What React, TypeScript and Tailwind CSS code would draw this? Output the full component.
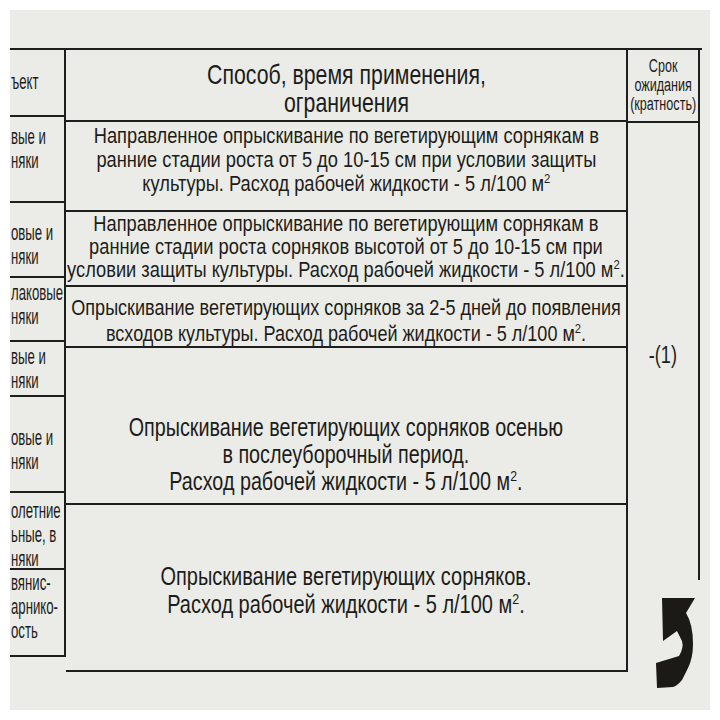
import React from "react";

const M2 = () => (
  <>
    м<sup className="text-[0.62em] top-[-0.6em]">2</sup>
  </>
);

const objectCells = [
  { cls: "h-[67px] pt-[20px]", lines: ["ъект"] },
  { cls: "h-[86px] pt-[8px]", lines: ["вые и", "няки"] },
  { cls: "h-[75px] pt-[18px]", lines: ["овые и", "няки"] },
  { cls: "h-[64px] pt-[3px]", lines: ["лаковые", "няки"] },
  { cls: "h-[55px] pt-[3px]", lines: ["вые и", "няки"] },
  { cls: "h-[96px] pt-[29px]", lines: ["овые и", "няки"] },
  { cls: "h-[77px] pt-[6px] leading-[22px]", lines: ["олетние", "ьные, в", "няки"] },
  { cls: "h-[87px] pt-[1px] leading-[22px]", lines: ["вянис-", "арнико-", "ость"] },
];

const Arrow = () => (
  <svg width="42" height="94" viewBox="0 0 42 94" className="ml-[27px] mt-[16px]">
    <path
      d="M7 2 L40 2 L31 17 Q38 28 38 48 Q38 62 33 72 L27 84 Q22 90 18 91 L2 92 L1 67 L24 60 Q29 52 27 45 L22 35 L8 45 Z"
      fill="#1b1a16"
    />
  </svg>
);

export default function App() {
  return (
    <div className="w-[720px] h-[720px] bg-white pt-[10px] pl-[10px]">
      <div className="w-[700px] h-[700px] bg-[#ebece7] overflow-hidden pt-[38px] text-[#1c1c1a] font-['Liberation_Sans',Arial,sans-serif]">
        <div className="flex items-start w-[692px] border-t-2 border-[#1e1e1c]">
          {/* объект */}
          <div className="w-[56px] shrink-0 flex flex-col border-r-2 border-[#1e1e1c]">
            {objectCells.map((c, i) => (
              <div
                key={i}
                className={`${c.cls} overflow-hidden border-b-2 border-[#1e1e1c] pl-[1px] text-[22px] leading-[24px] whitespace-nowrap`}
              >
                <div className="scale-x-[0.6] origin-left">
                  {c.lines.map((l) => (
                    <div key={l}>{l}</div>
                  ))}
                </div>
              </div>
            ))}
          </div>

          {/* способ, время применения */}
          <div className="w-[562px] shrink-0 flex flex-col border-r-2 border-[#1e1e1c] text-center whitespace-nowrap">
            <div className="h-[72px] border-b-2 border-[#1e1e1c] flex justify-center pt-[11px]">
              <p className="scale-x-[0.76] text-[28px] leading-[28px]">
                Способ, время применения,
                <br />
                ограничения
              </p>
            </div>
            <div className="h-[90px] border-b-2 border-[#1e1e1c] flex justify-center pt-[2px]">
              <p className="scale-x-[0.83] text-[22px] leading-[24px]">
                Направленное опрыскивание по вегетирующим сорнякам в
                <br />
                ранние стадии роста от 5 до 10-15 см при условии защиты
                <br />
                культуры. Расход рабочей жидкости - 5 л/100 <M2 />
              </p>
            </div>
            <div className="h-[75px] border-b-2 border-[#1e1e1c] flex justify-center">
              <p className="scale-x-[0.83] text-[22px] leading-[23px]">
                Направленное опрыскивание по вегетирующим сорнякам в
                <br />
                ранние стадии роста сорняков высотой от 5 до 10-15 см при
                <br />
                условии защиты культуры. Расход рабочей жидкости - 5 л/100 <M2 />.
              </p>
            </div>
            <div className="h-[61px] border-b-2 border-[#1e1e1c] flex justify-center pt-[8px]">
              <p className="scale-x-[0.82] text-[22px] leading-[26px]">
                Опрыскивание вегетирующих сорняков за 2-5 дней до появления
                <br />
                всходов культуры. Расход рабочей жидкости - 5 л/100 <M2 />.
              </p>
            </div>
            <div className="h-[157px] border-b-2 border-[#1e1e1c] flex justify-center pt-[66px]">
              <p className="scale-x-[0.79] text-[25px] leading-[27px]">
                Опрыскивание вегетирующих сорняков осенью
                <br />
                в послеуборочный период.
                <br />
                Расход рабочей жидкости - 5 л/100 <M2 />.
              </p>
            </div>
            <div className="h-[167px] border-b-2 border-[#1e1e1c] flex justify-center pt-[57px]">
              <p className="scale-x-[0.8] text-[25px] leading-[28px]">
                Опрыскивание вегетирующих сорняков.
                <br />
                Расход рабочей жидкости - 5 л/100 <M2 />.
              </p>
            </div>
          </div>

          {/* срок ожидания */}
          <div className="w-[72px] shrink-0 flex flex-col text-center whitespace-nowrap">
            <div className="h-[73px] border-b-2 border-r-2 border-[#1e1e1c] flex justify-center pt-[7px]">
              <p className="scale-x-[0.7] text-[18px] leading-[19px]">
                Срок
                <br />
                ожидания
                <br />
                (кратность)
              </p>
            </div>
            <div className="h-[457px] border-r-2 border-[#1e1e1c] flex justify-center pt-[220px]">
              <p className="scale-x-[0.79] text-[23px] leading-[24px]">-(1)</p>
            </div>
            <Arrow />
          </div>
        </div>
      </div>
    </div>
  );
}
